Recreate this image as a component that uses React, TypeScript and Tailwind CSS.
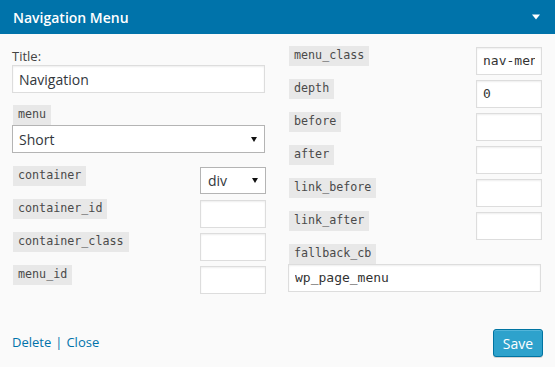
import React from "react";

const mono = "font-['DejaVu_Sans_Mono',monospace]";

function Code({ children }: { children: React.ReactNode }) {
  return (
    <span
      className={`${mono} ml-[1px] inline-flex h-[20px] items-center bg-[#e8e8e8] px-[5px] text-[11.7px] leading-none text-[#4a4a4a]`}
    >
      {children}
    </span>
  );
}

function Arrow() {
  return (
    <svg width="6" height="5" viewBox="0 0 6 5" className="shrink-0">
      <path d="M0 0 H6 L3 5 Z" fill="#111" />
    </svg>
  );
}

function TextInput({ value, w, monoText }: { value?: string; w: string; monoText?: boolean }) {
  return (
    <div
      className={`${w} flex h-[28px] items-center border border-[#dddddd] bg-white px-[6px] shadow-[inset_0_1px_2px_rgba(0,0,0,0.07)] ${
        monoText ? `${mono} text-[13px] text-[#333]` : "text-[14px] text-[#32373c]"
      }`}
    >
      <span className="block min-w-0 flex-1 overflow-hidden whitespace-nowrap">{value}</span>
    </div>
  );
}

function Row({ label, children }: { label: string; children: React.ReactNode }) {
  return (
    <div className="mb-[4px] flex h-[29px] items-start justify-between">
      <Code>{label}</Code>
      <div className="mt-[1px]">{children}</div>
    </div>
  );
}

export default function App() {
  return (
    <div className="flex h-[367px] w-[555px] flex-col bg-[#fafafa] font-['Open_Sans',sans-serif]">
      <div className="flex h-[34px] shrink-0 items-center justify-between bg-[#0073aa] pl-[13px] pr-[15px]">
        <span className="text-[14px] font-semibold text-white">Navigation Menu</span>
        <svg width="8" height="6" viewBox="0 0 8 6">
          <path d="M0 0.5 H8 L4 5.5 Z" fill="#fff" />
        </svg>
      </div>

      <div className="flex items-start gap-[22px] px-[12px] pt-[12px]">
        {/* left column */}
        <div className="mt-[2px] flex w-[254px] flex-col">
          <div className="h-[17px] text-[13px] leading-[17px] text-[#444]">Title:</div>
          <TextInput value="Navigation" w="w-[253px]" />
          <div className="mt-[12px] flex">
            <Code>menu</Code>
          </div>
          <div className="flex h-[28px] w-[253px] items-center justify-between border border-[#b4b4b4] bg-white pl-[6px] pr-[7px] text-[14px] text-[#32373c]">
            <span>Short</span>
            <Arrow />
          </div>
          <div className="mt-[13px] flex flex-col">
            <Row label="container">
              <div className="flex h-[27px] w-[66px] items-center justify-between border border-[#b4b4b4] bg-white pl-[7px] pr-[7px] text-[14px] text-[#32373c]">
                <span>div</span>
                <Arrow />
              </div>
            </Row>
            <Row label="container_id">
              <TextInput w="w-[66px]" />
            </Row>
            <Row label="container_class">
              <TextInput w="w-[66px]" />
            </Row>
            <Row label="menu_id">
              <TextInput w="w-[66px]" />
            </Row>
          </div>
        </div>

        {/* right column */}
        <div className="flex w-[254px] flex-col">
          <Row label="menu_class">
            <TextInput value="nav-menu" w="w-[66px]" monoText />
          </Row>
          <Row label="depth">
            <TextInput value="0" w="w-[66px]" monoText />
          </Row>
          <Row label="before">
            <TextInput w="w-[66px]" />
          </Row>
          <Row label="after">
            <TextInput w="w-[66px]" />
          </Row>
          <Row label="link_before">
            <TextInput w="w-[66px]" />
          </Row>
          <Row label="link_after">
            <TextInput w="w-[66px]" />
          </Row>
          <div className="flex">
            <Code>fallback_cb</Code>
          </div>
          <TextInput value="wp_page_menu" w="w-[253px]" monoText />
        </div>
      </div>

      <div className="mt-[31px] flex h-[28px] items-center justify-between pl-[12px] pr-[12px] text-[13px]">
        <div className="text-[#0073aa]">
          <span>Delete</span>
          <span className="mx-[4px]">|</span>
          <span>Close</span>
        </div>
        <div className="flex h-[28px] w-[50px] items-center justify-center rounded-[3px] border border-[#0074a2] bg-[#2ea2cc] text-[14px] text-white shadow-[inset_0_1px_0_rgba(120,200,230,0.5),0_1px_0_rgba(0,0,0,0.15)]">
          Save
        </div>
      </div>
    </div>
  );
}
